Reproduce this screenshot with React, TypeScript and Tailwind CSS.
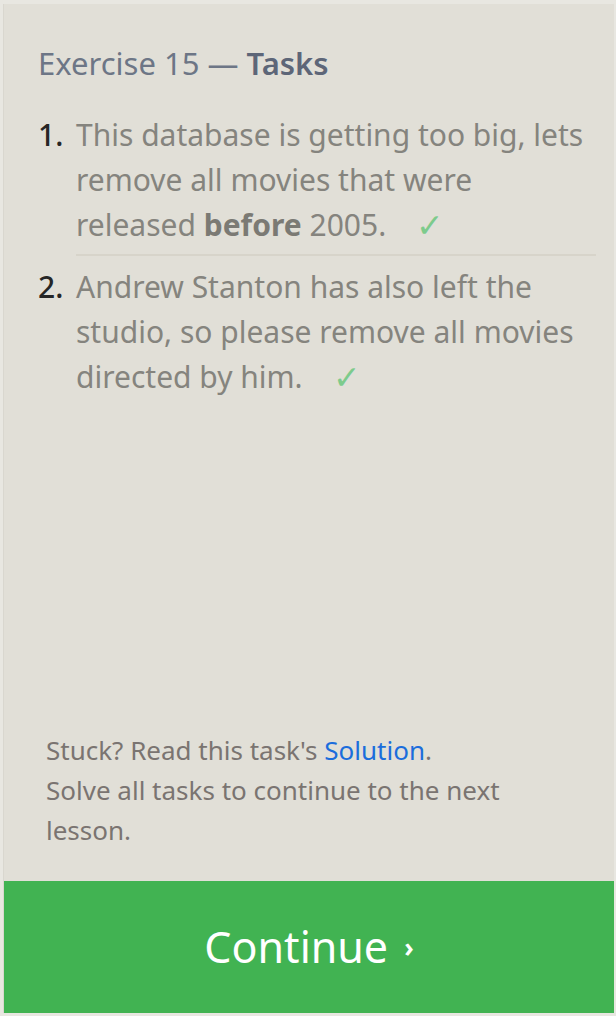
const tasks = [
  {
    id: 1,
    body: (
      <>
        This database is getting too big, lets remove all movies that were
        released <strong className="font-bold text-[#7b7a74]">before</strong> 2005.
      </>
    ),
  },
  {
    id: 2,
    body: (
      <>Andrew Stanton has also left the studio, so please remove all movies directed by him.</>
    ),
  },
];

function Check() {
  return (
    <span className="ml-[30px] inline-block align-top text-[33px] leading-[45px] text-[#7dcb8c]">
      ✓
    </span>
  );
}

export default function App() {
  return (
    <div
      className="flex h-[1016px] w-[616px] bg-[#e8e7e1] pt-[4px] pr-[2px] pb-[3px] pl-[3px]"
      style={{ fontFamily: '"Noto Sans", "Open Sans", sans-serif' }}
    >
      <div className="flex flex-1 flex-col border-l border-[#d9d7cf] bg-[#e1dfd7]">
        <div className="flex-1 pr-[18px] pl-[34px] pt-[39px]">
          <h2 className="text-[31px] leading-[40px] text-[#6d7686]">
            Exercise 15 — <span className="font-semibold text-[#5d6678]">Tasks</span>
          </h2>

          <ol className="mt-[29px]">
            {tasks.map((task, i) => (
              <li
                key={task.id}
                className={
                  i === 0
                    ? "flex text-[30px] leading-[45px]"
                    : "flex pt-[8px] text-[30px] leading-[45px]"
                }
              >
                <span className="w-[38px] shrink-0 font-medium text-[#262626]">{task.id}.</span>
                <div
                  className={
                    i === 0
                      ? "flex-1 border-b-2 border-[#d7d4ca] pb-[7px] text-[#85847e]"
                      : "flex-1 text-[#85847e]"
                  }
                >
                  {task.body}
                  <Check />
                </div>
              </li>
            ))}
          </ol>
        </div>

        <div className="pr-[40px] pl-[42px] pb-[31px] text-[26px] leading-[40px] text-[#7a7471]">
          <p>
            Stuck? Read this task's <a className="text-[#1b6ddc]">Solution</a>.
          </p>
          <p>Solve all tasks to continue to the next lesson.</p>
        </div>

        <button className="flex h-[132px] w-full items-center justify-center gap-[16px] bg-[#41b352] text-[43px] text-white">
          Continue
          <span className="text-[26px] font-bold">›</span>
        </button>
      </div>
    </div>
  );
}
